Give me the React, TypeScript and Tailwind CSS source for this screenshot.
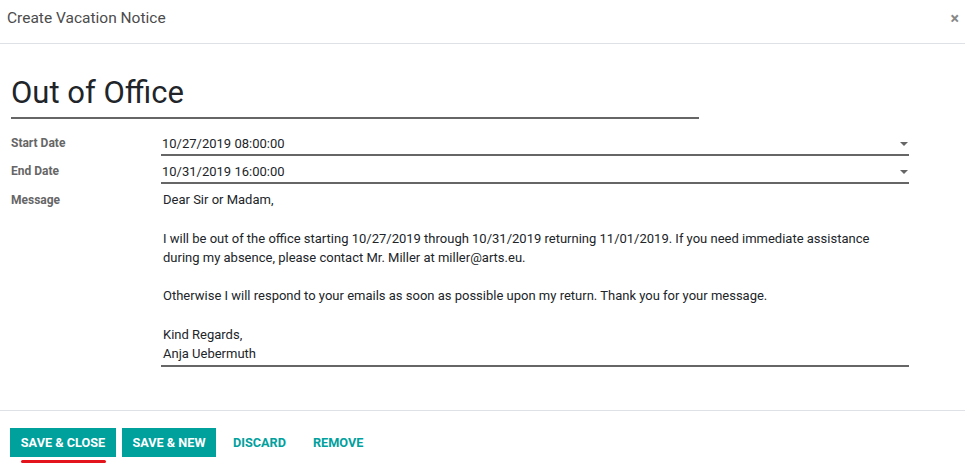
export default function App() {
  return (
    <div className="h-[467px] w-[965px] overflow-hidden bg-white font-['Roboto',sans-serif] text-[#212529]">
      <header className="flex h-[44px] items-center justify-between border-b border-[#dee2e6] pb-[5px] pl-[7px] pr-[6px]">
        <h4 className="text-[15.5px] text-[#4c4c4c]">Create Vacation Notice</h4>
        <button className="text-[16px] font-bold leading-none text-[#888]">×</button>
      </header>

      <section className="h-[366px] pl-[11px] pr-[56px] pt-[29px]">
        <div className="w-[688px] border-b-2 border-[#666] pb-[4px] text-[31px] leading-[40px] text-[#212529]">
          Out of Office
        </div>

        <div className="mt-[14px] grid grid-cols-[150px_1fr] gap-y-[5px] text-[13px]">
          <label className="pt-[1px] text-[12px] font-bold text-[#666]">Start Date</label>
          <div className="flex h-[23px] items-center justify-between border-b-2 border-[#666] pl-[1px] pr-[1px]">
            <span>10/27/2019 08:00:00</span>
            <span className="h-0 w-0 border-x-[4px] border-t-[4px] border-x-transparent border-t-[#666]" />
          </div>

          <label className="pt-[1px] text-[12px] font-bold text-[#666]">End Date</label>
          <div className="flex h-[23px] items-center justify-between border-b-2 border-[#666] pl-[1px] pr-[1px]">
            <span>10/31/2019 16:00:00</span>
            <span className="h-0 w-0 border-x-[4px] border-t-[4px] border-x-transparent border-t-[#666]" />
          </div>

          <label className="pt-[2px] text-[12px] font-bold text-[#666]">Message</label>
          <div className="border-b-2 border-[#666] pb-[1px] pl-[2px] pt-[1px] leading-[19.3px]">
            <p>Dear Sir or Madam,</p>
            <p className="mt-[19.3px]">
              I will be out of the office starting 10/27/2019 through 10/31/2019 returning 11/01/2019. If you need immediate assistance during my absence, please contact Mr. Miller at miller@arts.eu.
            </p>
            <p className="mt-[19.3px]">
              Otherwise I will respond to your emails as soon as possible upon my return. Thank you for your message.
            </p>
            <p className="mt-[19.3px]">Kind Regards,</p>
            <p>Anja Uebermuth</p>
          </div>
        </div>
      </section>

      <footer className="flex items-center gap-[6px] border-t border-[#dee2e6] pl-[10px] pt-[17px] text-[12.7px] font-bold">
        <div className="relative">
          <button className="h-[29px] w-[106px] bg-[#00a09d] uppercase text-white">Save &amp; Close</button>
          <span className="absolute left-[11px] top-[32px] h-[3px] w-[85px] rounded-full bg-[#e3141b]" />
        </div>
        <button className="h-[29px] w-[94px] bg-[#00a09d] uppercase text-white">Save &amp; New</button>
        <button className="h-[29px] px-[11px] uppercase text-[#00a09d]">Discard</button>
        <button className="h-[29px] px-[10px] uppercase text-[#00a09d]">Remove</button>
      </footer>
    </div>
  );
}
